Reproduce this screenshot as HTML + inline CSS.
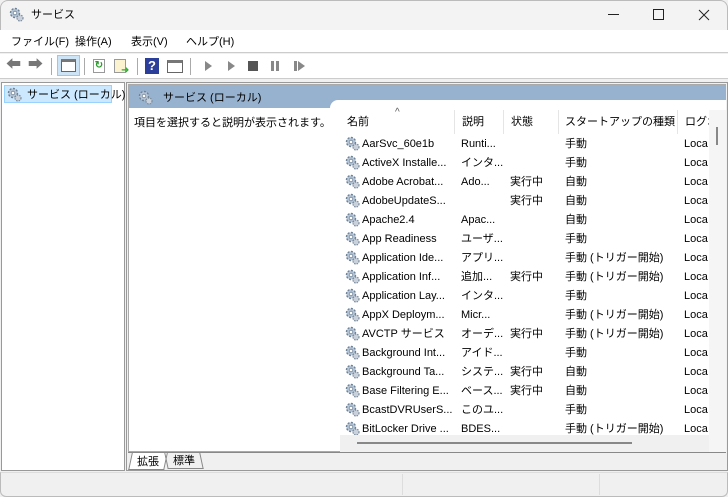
<!DOCTYPE html>
<html><head><meta charset="utf-8"><style>
*{margin:0;padding:0;box-sizing:border-box}
body{width:728px;height:497px;overflow:hidden;background:#f0f0f0;font-family:"Liberation Sans","Noto Sans CJK JP",sans-serif;font-size:11px;line-height:14px;color:#000;position:relative}
.a{position:absolute;white-space:nowrap}
.gear{position:absolute;width:15px;height:15px}
.row{position:absolute;left:343px;height:19px;width:366px}
.row span{position:absolute;top:3px}
</style></head><body>
<svg width="0" height="0" style="position:absolute"><defs>
<g id="g"><circle cx="6" cy="6" r="4.5" fill="#b7c6d6" stroke="#6d8196" stroke-width="1.4" stroke-dasharray="2 1.5"/><circle cx="6" cy="6" r="1.8" fill="#fff" stroke="#6d8196" stroke-width=".8"/><circle cx="11" cy="11" r="3" fill="#c9d2dc" stroke="#7a8a9a" stroke-width="1.2" stroke-dasharray="1.5 1"/></g>
</defs></svg>
<div class="a" style="left:0;top:0;width:728px;height:30px;background:#f3f3f3;border:1px solid #bbb;border-bottom:none;border-radius:8px 8px 0 0"></div>
<svg class="gear" style="left:9px;top:7px"><use href="#g"/></svg>
<div class="a" style="left:31px;top:8px">サービス</div>
<div class="a" style="left:608px;top:14px;width:11px;height:1px;background:#222"></div>
<div class="a" style="left:653px;top:9px;width:11px;height:11px;border:1px solid #222"></div>
<svg class="a" style="left:698px;top:9px" width="12" height="12"><path d="M1 1L11 11M11 1L1 11" stroke="#222" stroke-width="1"/></svg>
<div class="a" style="left:0;top:30px;width:728px;height:23px;background:#fff;border-bottom:1px solid #ccc"></div>
<div class="a" style="left:11px;top:35px">ファイル(F)</div>
<div class="a" style="left:75px;top:35px">操作(A)</div>
<div class="a" style="left:131px;top:35px">表示(V)</div>
<div class="a" style="left:186px;top:35px">ヘルプ(H)</div>
<div class="a" style="left:0;top:54px;width:728px;height:25px;background:#fff;border-bottom:1px solid #ccc"></div>
<div class="a" style="left:6px;top:58px;font-size:15px;color:#777">⬅</div>
<div class="a" style="left:28px;top:58px;font-size:15px;color:#777">➡</div>
<div class="a" style="left:51px;top:58px;width:1px;height:17px;background:#aaa"></div>
<div class="a" style="left:57px;top:55px;width:23px;height:21px;background:#cde4f7;border:1px solid #9cc7ea"></div>
<div class="a" style="left:61px;top:59px;width:15px;height:13px;border:1px solid #666;background:#fff;border-top:3px solid #777"></div>
<div class="a" style="left:84px;top:58px;width:1px;height:17px;background:#aaa"></div>
<div class="a" style="left:93px;top:59px;width:12px;height:14px;border:1px solid #999;background:#fff;color:#2a9a2a;font-size:10px;line-height:12px;text-align:center;font-weight:bold">↻</div>
<div class="a" style="left:114px;top:59px;width:12px;height:14px;border:1px solid #999;background:#fbf3d0"></div>
<div class="a" style="left:121px;top:64px;color:#3a3;font-size:10px">➜</div>
<div class="a" style="left:137px;top:58px;width:1px;height:17px;background:#aaa"></div>
<div class="a" style="left:145px;top:58px;width:14px;height:16px;background:#2b3f9a;color:#fff;font-weight:bold;text-align:center;font-size:13px;line-height:16px">?</div>
<div class="a" style="left:167px;top:60px;width:16px;height:13px;border:1px solid #666;background:#fff;border-top:3px solid #777"></div>
<div class="a" style="left:190px;top:58px;width:1px;height:17px;background:#aaa"></div>
<div class="a" style="left:205px;top:61px;width:0;height:0;border-left:7px solid #888;border-top:5px solid transparent;border-bottom:5px solid transparent"></div>
<div class="a" style="left:228px;top:61px;width:0;height:0;border-left:7px solid #888;border-top:5px solid transparent;border-bottom:5px solid transparent"></div>
<div class="a" style="left:248px;top:61px;width:10px;height:10px;background:#555"></div>
<div class="a" style="left:271px;top:61px;width:3px;height:10px;background:#888"></div>
<div class="a" style="left:276px;top:61px;width:3px;height:10px;background:#888"></div>
<div class="a" style="left:294px;top:61px;width:3px;height:10px;background:#888"></div>
<div class="a" style="left:298px;top:61px;width:0;height:0;border-left:7px solid #888;border-top:5px solid transparent;border-bottom:5px solid transparent"></div>
<div class="a" style="left:1px;top:82px;width:124px;height:389px;background:#fff;border:1px solid #999"></div>
<div class="a" style="left:4px;top:85px;width:108px;height:18px;background:#cce8ff;border:1px solid #99d1ff"></div>
<svg class="gear" style="left:7px;top:87px"><use href="#g"/></svg>
<div class="a" style="left:27px;top:88px">サービス (ローカル)</div>
<div class="a" style="left:126px;top:82px;width:602px;height:389px;background:#f0f0f0;border:1px solid #999"></div>
<div class="a" style="left:128px;top:84px;width:598px;height:368px;background:#fff;border:1px solid #aaa"></div>
<div class="a" style="left:129px;top:85px;width:597px;height:23px;background:#97b2cf"></div>
<div class="a" style="left:330px;top:100px;width:396px;height:20px;background:#fff;border-radius:8px 0 0 0"></div>
<svg class="gear" style="left:138px;top:90px"><use href="#g"/></svg>
<div class="a" style="left:163px;top:91px">サービス (ローカル)</div>
<div class="a" style="left:134px;top:116px">項目を選択すると説明が表示されます。</div>
<div class="a" style="left:395px;top:106px;font-size:10px;color:#555">^</div>
<div class="a" style="left:347px;top:115px">名前</div>
<div class="a" style="left:462px;top:115px">説明</div>
<div class="a" style="left:511px;top:115px">状態</div>
<div class="a" style="left:565px;top:115px">スタートアップの種類</div>
<div class="a" style="left:685px;top:115px">ログオ</div>
<div class="a" style="left:454px;top:110px;width:1px;height:24px;background:#e5e5e5"></div>
<div class="a" style="left:503px;top:110px;width:1px;height:24px;background:#e5e5e5"></div>
<div class="a" style="left:558px;top:110px;width:1px;height:24px;background:#e5e5e5"></div>
<div class="a" style="left:677px;top:110px;width:1px;height:24px;background:#e5e5e5"></div>
<div style="position:absolute;left:0;top:0">
<div class="row" style="top:134px"><svg class="gear" style="left:2px;top:2px"><use href="#g"/></svg><span style="left:19px">AarSvc_60e1b</span><span style="left:118px">Runti...</span><span style="left:222px">手動</span><span style="left:341px">Loca</span></div>
<div class="row" style="top:153px"><svg class="gear" style="left:2px;top:2px"><use href="#g"/></svg><span style="left:19px">ActiveX Installe...</span><span style="left:118px">インタ...</span><span style="left:222px">手動</span><span style="left:341px">Loca</span></div>
<div class="row" style="top:172px"><svg class="gear" style="left:2px;top:2px"><use href="#g"/></svg><span style="left:19px">Adobe Acrobat...</span><span style="left:118px">Ado...</span><span style="left:167px">実行中</span><span style="left:222px">自動</span><span style="left:341px">Loca</span></div>
<div class="row" style="top:191px"><svg class="gear" style="left:2px;top:2px"><use href="#g"/></svg><span style="left:19px">AdobeUpdateS...</span><span style="left:167px">実行中</span><span style="left:222px">自動</span><span style="left:341px">Loca</span></div>
<div class="row" style="top:210px"><svg class="gear" style="left:2px;top:2px"><use href="#g"/></svg><span style="left:19px">Apache2.4</span><span style="left:118px">Apac...</span><span style="left:222px">自動</span><span style="left:341px">Loca</span></div>
<div class="row" style="top:229px"><svg class="gear" style="left:2px;top:2px"><use href="#g"/></svg><span style="left:19px">App Readiness</span><span style="left:118px">ユーザ...</span><span style="left:222px">手動</span><span style="left:341px">Loca</span></div>
<div class="row" style="top:248px"><svg class="gear" style="left:2px;top:2px"><use href="#g"/></svg><span style="left:19px">Application Ide...</span><span style="left:118px">アプリ...</span><span style="left:222px">手動 (トリガー開始)</span><span style="left:341px">Loca</span></div>
<div class="row" style="top:267px"><svg class="gear" style="left:2px;top:2px"><use href="#g"/></svg><span style="left:19px">Application Inf...</span><span style="left:118px">追加...</span><span style="left:167px">実行中</span><span style="left:222px">手動 (トリガー開始)</span><span style="left:341px">Loca</span></div>
<div class="row" style="top:286px"><svg class="gear" style="left:2px;top:2px"><use href="#g"/></svg><span style="left:19px">Application Lay...</span><span style="left:118px">インタ...</span><span style="left:222px">手動</span><span style="left:341px">Loca</span></div>
<div class="row" style="top:305px"><svg class="gear" style="left:2px;top:2px"><use href="#g"/></svg><span style="left:19px">AppX Deploym...</span><span style="left:118px">Micr...</span><span style="left:222px">手動 (トリガー開始)</span><span style="left:341px">Loca</span></div>
<div class="row" style="top:324px"><svg class="gear" style="left:2px;top:2px"><use href="#g"/></svg><span style="left:19px">AVCTP サービス</span><span style="left:118px">オーデ...</span><span style="left:167px">実行中</span><span style="left:222px">手動 (トリガー開始)</span><span style="left:341px">Loca</span></div>
<div class="row" style="top:343px"><svg class="gear" style="left:2px;top:2px"><use href="#g"/></svg><span style="left:19px">Background Int...</span><span style="left:118px">アイド...</span><span style="left:222px">手動</span><span style="left:341px">Loca</span></div>
<div class="row" style="top:362px"><svg class="gear" style="left:2px;top:2px"><use href="#g"/></svg><span style="left:19px">Background Ta...</span><span style="left:118px">システ...</span><span style="left:167px">実行中</span><span style="left:222px">自動</span><span style="left:341px">Loca</span></div>
<div class="row" style="top:381px"><svg class="gear" style="left:2px;top:2px"><use href="#g"/></svg><span style="left:19px">Base Filtering E...</span><span style="left:118px">ベース...</span><span style="left:167px">実行中</span><span style="left:222px">自動</span><span style="left:341px">Loca</span></div>
<div class="row" style="top:400px"><svg class="gear" style="left:2px;top:2px"><use href="#g"/></svg><span style="left:19px">BcastDVRUserS...</span><span style="left:118px">このユ...</span><span style="left:222px">手動</span><span style="left:341px">Loca</span></div>
<div class="row" style="top:419px;height:16px;overflow:hidden"><svg class="gear" style="left:2px;top:2px"><use href="#g"/></svg><span style="left:19px">BitLocker Drive ...</span><span style="left:118px">BDES...</span><span style="left:222px">手動 (トリガー開始)</span><span style="left:341px">Loca</span></div>
</div>
<div class="a" style="left:709px;top:110px;width:17px;height:342px;background:#f5f5f5"></div>
<div class="a" style="left:716px;top:127px;width:2px;height:18px;background:#888"></div>
<div class="a" style="left:340px;top:435px;width:369px;height:17px;background:#f0f0f0"></div>
<div class="a" style="left:357px;top:442px;width:275px;height:2px;background:#888"></div>
<div class="a" style="left:128px;top:452px;width:598px;height:1px;background:#888"></div>
<div class="a" style="left:130px;top:453px;width:36px;height:17px;background:#fff;border:1px solid #888;border-top:none;transform:skewX(-12deg)"></div>
<div class="a" style="left:137px;top:455px">拡張</div>
<div class="a" style="left:166px;top:453px;width:36px;height:16px;border:1px solid #888;border-top:none;transform:skewX(12deg)"></div>
<div class="a" style="left:173px;top:454px">標準</div>
<div class="a" style="left:0;top:472px;width:728px;height:25px;background:#f0f0f0;border:1px solid #bbb;border-top:1px solid #ddd;border-radius:0 0 6px 6px"></div>
<div class="a" style="left:402px;top:474px;width:1px;height:21px;background:#ddd"></div>
<div class="a" style="left:599px;top:474px;width:1px;height:21px;background:#ddd"></div>
</body></html>
